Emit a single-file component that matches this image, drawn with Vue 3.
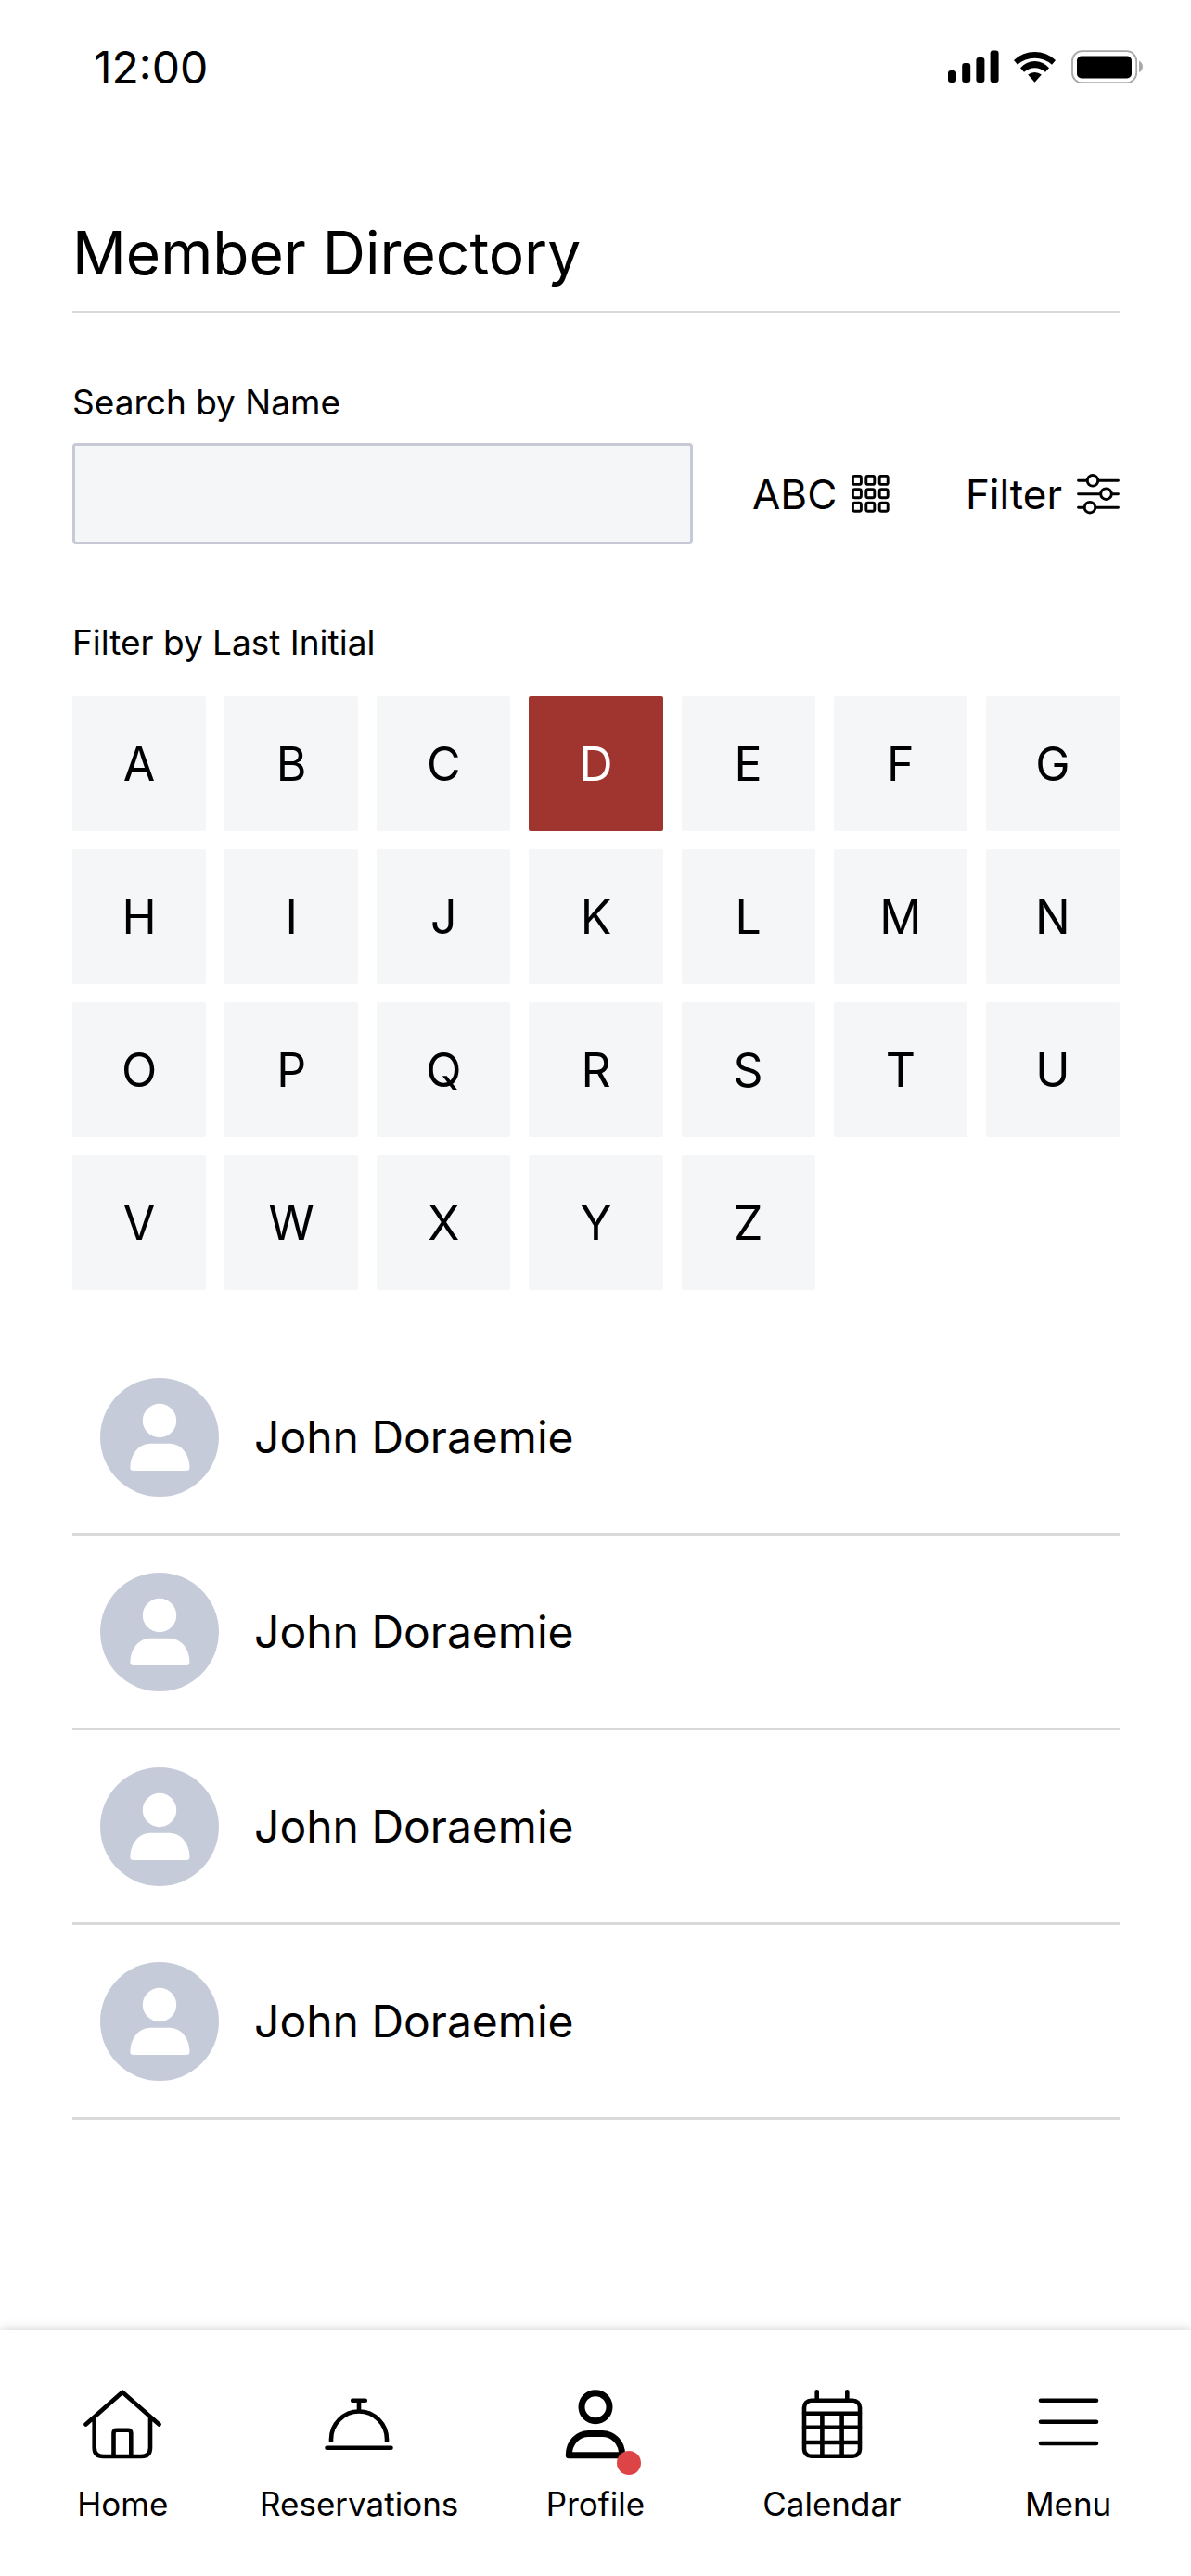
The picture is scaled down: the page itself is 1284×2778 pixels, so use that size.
<script setup>
import { ref } from 'vue'

const letters = 'ABCDEFGHIJKLMNOPQRSTUVWXYZ'.split('')
const selected = ref('D')
const query = ref('')

const members = [
  { id: 1, name: 'John Doraemie' },
  { id: 2, name: 'John Doraemie' },
  { id: 3, name: 'John Doraemie' },
  { id: 4, name: 'John Doraemie' },
]

const dots = [1.4, 15.8, 30.2]
</script>

<template>
  <div class="screen">
    <header class="status">
      <span class="time">12:00</span>
      <svg class="status-icons" viewBox="0 0 210 38" aria-hidden="true">
        <rect x="0" y="22" width="9" height="13" rx="3" />
        <rect x="15.2" y="14" width="9" height="21" rx="3" />
        <rect x="30.4" y="8" width="9" height="27" rx="3" />
        <rect x="45.6" y="0.4" width="9" height="34.6" rx="3" />
        <path d="M71 11A32.6 32.6 0 0 1 116 11L112 15.7A28 28 0 0 0 75 15.7Z" />
        <path d="M78 19.2A20.5 20.5 0 0 1 109 19.2L105 23.8A16.5 16.5 0 0 0 82 23.8Z" />
        <path d="M86.2 26.6A11.5 11.5 0 0 1 100.8 26.6L93.5 34.8Z" />
        <rect x="134" y="1.2" width="69.2" height="34" rx="10.5" fill="none" stroke="#a8a8a8" stroke-width="1.8" />
        <rect x="139" y="6.5" width="59" height="24" rx="5" />
        <path d="M206 11.5C211.3 14.5 211.3 21.5 206 24Z" fill="#a8a8a8" />
      </svg>
    </header>

    <main class="content">
      <h1 class="title">Member Directory</h1>

      <label class="label search-label" for="member-search">Search by Name</label>
      <div class="search-row">
        <input id="member-search" v-model="query" class="search" type="text" />
        <div class="tools">
          <button class="tool" type="button">
            ABC
            <svg width="41" height="42" viewBox="0 0 41 42" fill="none" stroke="#000" stroke-width="2.9" aria-hidden="true">
              <template v-for="y in dots" :key="y">
                <rect v-for="x in dots" :key="x" :x="x" :y="y" width="9" height="9" rx="2" />
              </template>
            </svg>
          </button>
          <button class="tool" type="button">
            Filter
            <svg width="46" height="44" viewBox="0 0 46 44" fill="none" stroke="#000" stroke-width="2.9" stroke-linecap="round" aria-hidden="true">
              <path d="M1.5 7.3H11M23 7.3H44.5M1.5 21.7H25.5M37.5 21.7H44.5M1.5 36.2H8M20 36.2H44.5" />
              <circle cx="17" cy="7.3" r="5.8" />
              <circle cx="31.5" cy="21.7" r="5.8" />
              <circle cx="14" cy="36.2" r="5.8" />
            </svg>
          </button>
        </div>
      </div>

      <h2 class="label initial-label">Filter by Last Initial</h2>
      <div class="letters">
        <button
          v-for="letter in letters"
          :key="letter"
          type="button"
          class="letter"
          :class="{ active: letter === selected }"
          :aria-pressed="letter === selected"
          @click="selected = letter"
        >
          {{ letter }}
        </button>
      </div>

      <ul class="members">
        <li v-for="member in members" :key="member.id" class="member">
          <svg class="avatar" viewBox="0 0 128 128" aria-hidden="true">
            <circle cx="64" cy="64" r="64" fill="#c6cbda" />
            <circle cx="64" cy="46" r="18.2" fill="#fff" />
            <path fill="#fff" d="M54 70.7H74.5C87 70.7 96.4 82 96.4 96.5V97Q96.4 100 93 100H35.8Q32.400 100 32.400 97V96.500C32.4 82 42 70.7 54 70.7Z" />
          </svg>
          <span>{{ member.name }}</span>
        </li>
      </ul>
    </main>

    <nav class="tabs">
      <a class="tab" href="#home">
        <span class="tab-icon">
          <svg viewBox="0 0 84 90" aria-hidden="true">
            <path d="M2.5 38.5L42 3.7L81.5 38.5M11.7 31V63.5Q11.7 73 21.2 73H62.5Q72 73 72 63.5V31M32.5 73V48Q32.5 44.7 35.8 44.7H48Q51.3 44.7 51.3 48V73" />
          </svg>
        </span>
        Home
      </a>
      <a class="tab" href="#reservations">
        <span class="tab-icon">
          <svg viewBox="0 0 84 90" aria-hidden="true">
            <path d="M7.5 63.7H76.5M35.2 12.7H48.8M42 12.7V24" />
            <path stroke-linecap="butt" d="M12 57V54.5A30 30 0 0 1 72 54.5V57" />
          </svg>
        </span>
        Reservations
      </a>
      <a class="tab" href="#profile" aria-current="page">
        <span class="tab-icon">
          <svg class="bold" viewBox="0 0 84 90" aria-hidden="true">
            <circle cx="42" cy="19.7" r="15" />
            <path d="M34.7 48.4H49.3C61 48.4 70.7 58 70.7 71.7H13.3C13.3 58 23 48.4 34.7 48.4Z" />
          </svg>
          <span class="badge"></span>
        </span>
        Profile
      </a>
      <a class="tab" href="#calendar">
        <span class="tab-icon">
          <svg viewBox="0 0 84 90" aria-hidden="true">
            <rect x="12" y="12.7" width="60" height="60" rx="7.5" />
            <path d="M12 26.7H72M12 41.7H72M12 58H72M31.4 26.7V72.7M52.6 26.7V72.7M25.7 3.4V12.7M58.3 3.4V12.7" />
          </svg>
        </span>
        Calendar
      </a>
      <a class="tab" href="#menu">
        <span class="tab-icon">
          <svg viewBox="0 0 84 90" aria-hidden="true">
            <path d="M12 12.7H72M12 35.8H72M12 59H72" />
          </svg>
        </span>
        Menu
      </a>
    </nav>
  </div>
</template>

<style>
body {
  margin: 0;
  background: #fff;
}
</style>

<style scoped>
.screen {
  display: flex;
  flex-direction: column;
  min-height: 100vh;
  background: #fff;
  color: #000;
  font-family: Inter, "Liberation Sans", sans-serif;
}

.status {
  display: flex;
  align-items: center;
  justify-content: space-between;
  padding: 43px 52px 0 101px;
}

.time {
  font-size: 48px;
  line-height: 60px;
}

.status-icons {
  width: 210px;
  height: 38px;
}

.content {
  flex: 1;
  padding: 130px 77px 48px 78px;
}

.title {
  margin: 0 0 72px;
  padding-bottom: 22px;
  border-bottom: 3px solid #d9d9d9;
  font-size: 64px;
  font-weight: 400;
  line-height: 80px;
}

.label {
  display: block;
  font-size: 37px;
  font-weight: 400;
  line-height: 48px;
}

.search-label {
  margin-bottom: 20px;
}

.search-row {
  display: flex;
  gap: 64px;
}

.search {
  box-sizing: border-box;
  flex: 1;
  min-width: 0;
  height: 109px;
  padding: 0 24px;
  border: 3px solid #c7cad6;
  border-radius: 4px;
  background: #f5f6f8;
  color: inherit;
  font: inherit;
  font-size: 44px;
}

.tools {
  display: flex;
  flex: 0 0 396px;
  justify-content: space-between;
}

.tool {
  display: flex;
  align-items: center;
  gap: 16px;
  padding: 0;
  border: 0;
  background: none;
  color: inherit;
  font: inherit;
  font-size: 44px;
  cursor: pointer;
}

.initial-label {
  margin: 82px 0 34px;
}

.letters {
  display: grid;
  grid-template-columns: repeat(7, 1fr);
  gap: 20px;
}

.letter {
  height: 145px;
  padding: 0;
  border: 0;
  border-radius: 2px;
  background: #f5f6f8;
  color: inherit;
  font: inherit;
  font-size: 50px;
  cursor: pointer;
}

.letter.active {
  background: #a03530;
  color: #fff;
}

.members {
  margin: 55px 0 0;
  padding: 0;
  list-style: none;
}

.member {
  display: flex;
  align-items: center;
  gap: 38px;
  padding: 40px 30px 39px;
  border-bottom: 3px solid #d9d9d9;
  font-size: 48px;
  line-height: 60px;
}

.avatar {
  flex: none;
  width: 128px;
  height: 128px;
}

.tabs {
  display: grid;
  grid-template-columns: repeat(5, 1fr);
  padding: 63px 5px 56px;
  background: #fff;
  box-shadow: 0 0 12px rgba(0, 0, 0, 0.2);
}

.tab {
  display: flex;
  flex-direction: column;
  align-items: center;
  gap: 12px;
  color: inherit;
  font-size: 35px;
  line-height: 44px;
  text-decoration: none;
}

.tab-icon {
  position: relative;
  width: 84px;
  height: 90px;
}

.tab-icon svg {
  display: block;
  width: 84px;
  height: 90px;
  fill: none;
  stroke: #000;
  stroke-width: 4.6;
  stroke-linecap: round;
  stroke-linejoin: round;
}

.tab-icon svg.bold {
  stroke-width: 7;
}

.badge {
  position: absolute;
  top: 67px;
  left: 65px;
  width: 26px;
  height: 26px;
  border-radius: 50%;
  background: #dc4446;
}
</style>
